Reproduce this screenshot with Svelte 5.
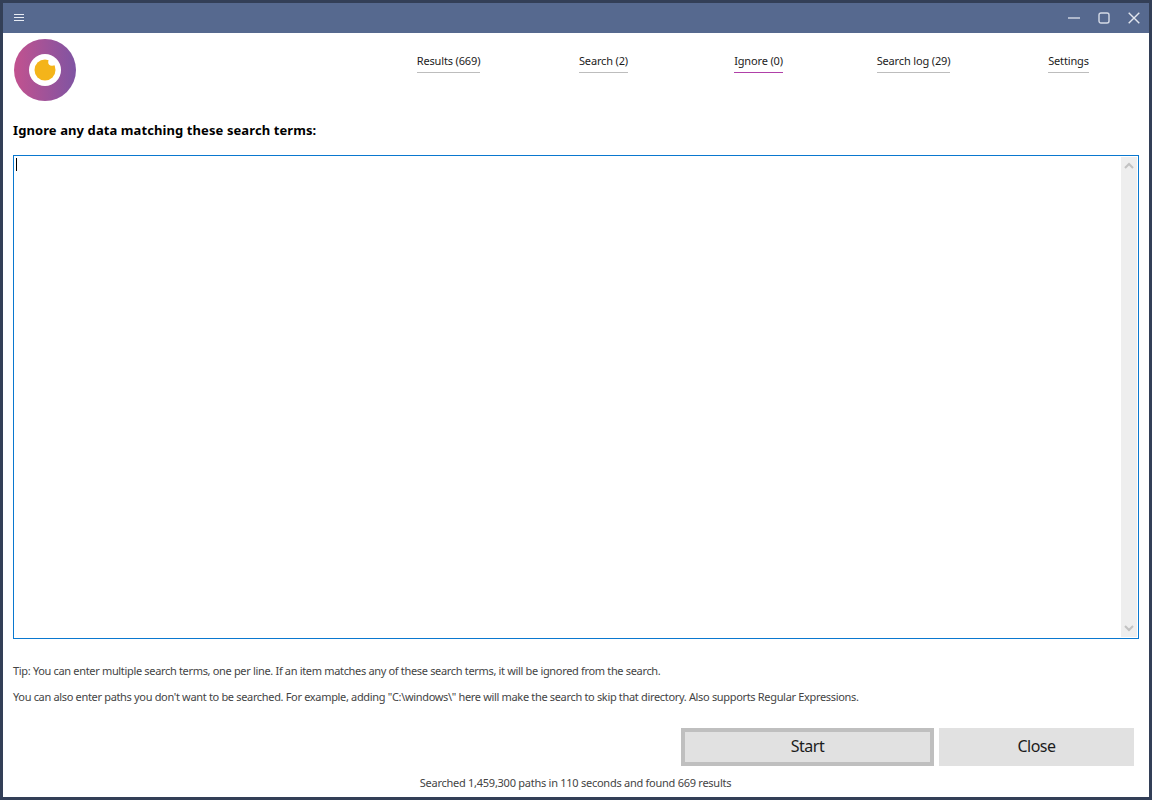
<script>
    let tabs = [
        { label: 'Results (669)' },
        { label: 'Search (2)' },
        { label: 'Ignore (0)', active: true },
        { label: 'Search log (29)' },
        { label: 'Settings' }
    ];
</script>

<div class="window">
    <header class="titlebar">
        <svg class="menu" width="10" height="8" viewBox="0 0 10 8"><path d="M0 .5h10M0 3.5h10M0 6.5h10" stroke="#e8ecf4" fill="none"/></svg>
        <div class="controls">
            <svg width="12" height="12" viewBox="0 0 12 12"><path d="M0 6h12" stroke="#d5dae6" stroke-width="1.4"/></svg>
            <svg width="12" height="12" viewBox="0 0 12 12"><rect x="1" y="1" width="10" height="10" rx="2" fill="none" stroke="#d5dae6" stroke-width="1.4"/></svg>
            <svg width="12" height="12" viewBox="0 0 12 12"><path d="M.7.7l10.6 10.6M11.3.7L.7 11.3" stroke="#e2e6ee" stroke-width="1.4"/></svg>
        </div>
    </header>

    <main class="content">
        <div class="top">
            <svg class="logo" width="62" height="62" viewBox="0 0 62 62">
                <defs>
                    <linearGradient id="ring" x1="0" x2="1" y1="0" y2="0">
                        <stop offset="0" stop-color="#c2528f"/>
                        <stop offset="1" stop-color="#7f54a2"/>
                    </linearGradient>
                </defs>
                <circle cx="31" cy="31" r="31" fill="url(#ring)"/>
                <circle cx="31" cy="31" r="16" fill="#fff"/>
                <circle cx="31" cy="31" r="10.5" fill="#f4b41a"/>
                <circle cx="38" cy="23" r="3.8" fill="#fff"/>
            </svg>
            <nav class="tabs">
                {#each tabs as tab}
                    <a class="tab {tab.active ? 'active' : ''}" href="#top">{tab.label}</a>
                {/each}
            </nav>
        </div>

        <h1>Ignore any data matching these search terms:</h1>

        <div class="terms">
            <div class="input"><span class="caret"></span></div>
            <div class="scrollbar">
                <svg width="10" height="7" viewBox="0 0 10 7"><path d="M1 6l4-4 4 4" fill="none" stroke="#c2c2c2" stroke-width="2"/></svg>
                <svg width="10" height="7" viewBox="0 0 10 7"><path d="M1 1l4 4 4-4" fill="none" stroke="#c2c2c2" stroke-width="2"/></svg>
            </div>
        </div>

        <p class="tip first">Tip: You can enter multiple search terms, one per line. If an item matches any of these search terms, it will be ignored from the search.</p>
        <p class="tip second">You can also enter paths you don't want to be searched. For example, adding "C:\windows\" here will make the search to skip that directory. Also supports Regular Expressions.</p>

        <div class="buttons">
            <button class="start">Start</button>
            <button class="close">Close</button>
        </div>

        <div class="status">Searched 1,459,300 paths in 110 seconds and found 669 results</div>
    </main>
</div>

<style>
    :global(body) {
        margin: 0;
        background: #333f57;
    }

    .window {
        box-sizing: border-box;
        width: 1152px;
        height: 800px;
        padding: 3px;
        display: flex;
        flex-direction: column;
        font-family: "Noto Sans", sans-serif;
        color: #1c1c1c;
    }

    .titlebar {
        flex: none;
        height: 30px;
        background: #56698f;
        display: flex;
        align-items: center;
        justify-content: space-between;
        padding: 0 8px 0 11px;
    }

    .menu {
        margin-top: -1px;
    }

    .controls {
        display: flex;
        gap: 18px;
        margin-right: 1px;
    }

    .content {
        flex: 1;
        background: #fff;
        display: flex;
        flex-direction: column;
        padding: 6px 10px 0 10px;
        min-height: 0;
    }

    .top {
        display: flex;
        height: 62px;
    }

    .logo {
        margin-left: 1px;
        flex: none;
    }

    .tabs {
        margin-left: 295px;
        display: grid;
        grid-template-columns: repeat(5, 155px);
        justify-items: center;
        align-items: start;
        padding-top: 14px;
    }

    .tab {
        font-size: 11px;
        line-height: 15px;
        letter-spacing: -0.15px;
        color: #1c1c1c;
        text-decoration: none;
        padding-bottom: 4px;
        border-bottom: 1px solid #bdbdbd;
    }

    .tab.active {
        border-bottom-color: #b040a8;
    }

    h1 {
        margin: 21px 0 0 0;
        font-size: 13px;
        line-height: 16px;
        letter-spacing: 0.09px;
        font-weight: bold;
        color: #000;
    }

    .terms {
        box-sizing: border-box;
        height: 484px;
        margin-top: 17px;
        width: 1126px;
        border: 1px solid #0a78cf;
        display: flex;
        padding: 1px;
    }

    .input {
        flex: 1;
        padding: 1px;
    }

    .caret {
        display: block;
        width: 1px;
        height: 13px;
        background: #000;
    }

    .scrollbar {
        width: 16px;
        background: #eeeeee;
        display: flex;
        flex-direction: column;
        align-items: center;
        justify-content: space-between;
        padding: 5px 0;
    }

    .tip {
        margin: 0;
        font-size: 11px;
        line-height: 14px;
        letter-spacing: -0.33px;
        color: #444;
    }

    .first {
        margin-top: 25px;
    }

    .second {
        margin-top: 12px;
    }

    .buttons {
        display: flex;
        justify-content: flex-end;
        gap: 5px;
        margin-top: 24px;
        padding-right: 5px;
    }

    button {
        box-sizing: border-box;
        height: 38px;
        background: #e1e1e1;
        border: none;
        font-family: inherit;
        font-size: 16px;
        letter-spacing: -0.5px;
        color: #1c1c1c;
        padding: 0 0 3px 0;
    }

    .start {
        width: 253px;
        border: 4px solid #bfbfbf;
    }

    .close {
        width: 195px;
    }

    .status {
        margin-top: 10px;
        text-align: center;
        font-size: 11px;
        line-height: 14px;
        letter-spacing: -0.26px;
        color: #444;
        margin-right: 1px;
    }
</style>
